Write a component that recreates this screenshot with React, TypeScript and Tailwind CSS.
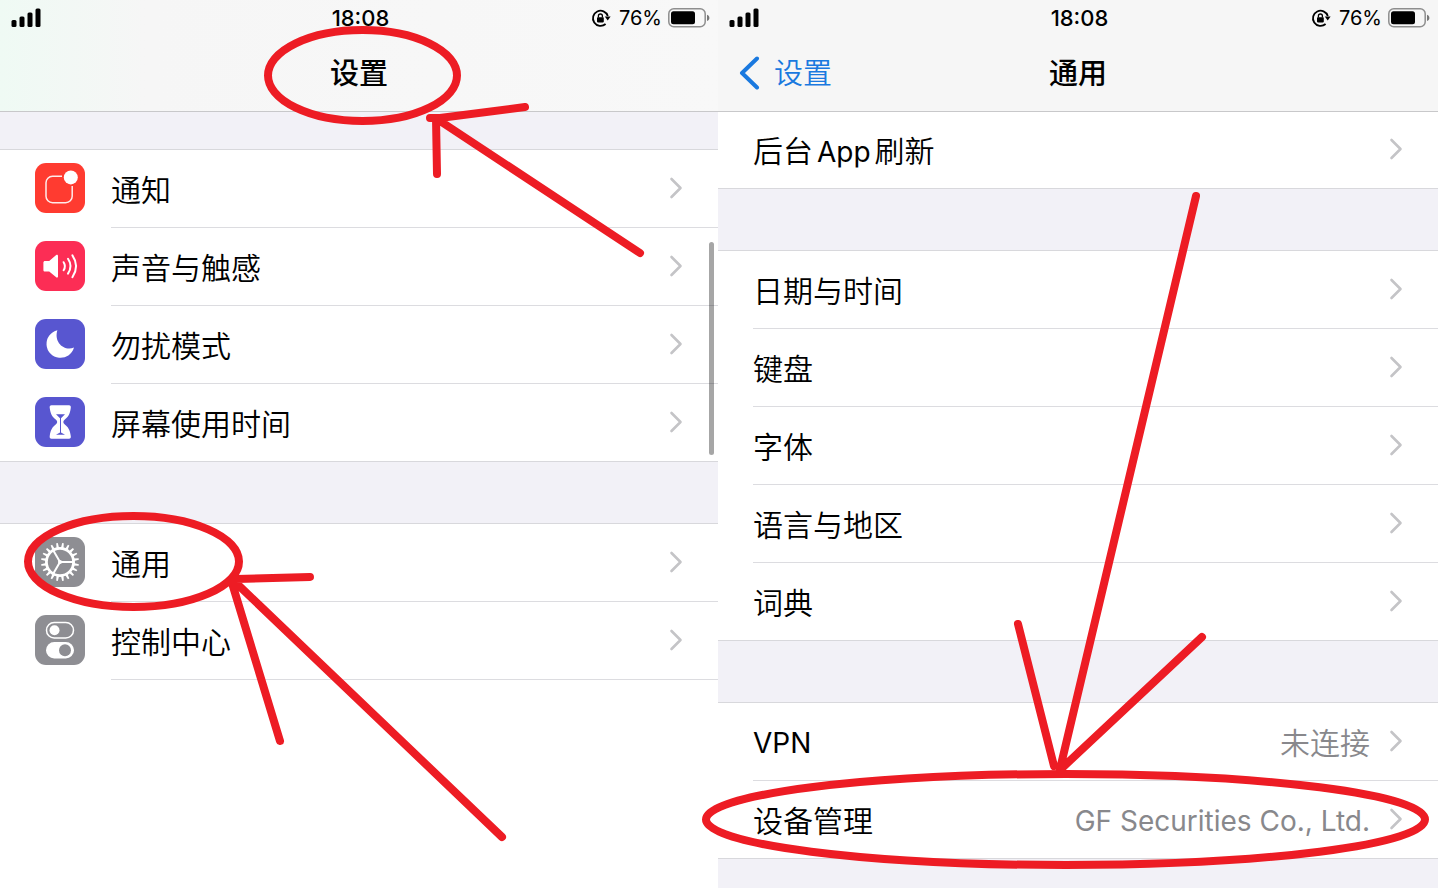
import type { ReactNode } from "react";

type RowProps = {
  label: ReactNode;
  icon?: ReactNode;
  value?: ReactNode;
};

const TEETH = Array.from({ length: 20 }, (_, i) => 9 + i * 18);

function Tile({ color, children }: { color: string; children: ReactNode }) {
  return (
    <svg viewBox="0 0 50 50" className="mb-0.5 mr-[26px] h-[50px] w-[50px] shrink-0" fill="none" aria-hidden="true">
      <rect width="50" height="50" rx="11" fill={color} />
      {children}
    </svg>
  );
}

function NotificationIcon() {
  return (
    <Tile color="#ff3b30">
      <path
        d="M27 13.3H17.5a6.5 6.5 0 0 0-6.5 6.5v13.4a6.5 6.5 0 0 0 6.5 6.5h13.2a6.5 6.5 0 0 0 6.5-6.5V23"
        stroke="#fff"
        strokeOpacity="0.9"
        strokeWidth="1.5"
      />
      <circle cx="35.8" cy="14.4" r="7" fill="#fff" />
    </Tile>
  );
}

function SoundIcon() {
  return (
    <Tile color="#fc2d55">
      <path d="M10 20h4.2l7-6c.8-.6 1.8-.2 1.8.9v20.6c0 1-1 1.5-1.8.8l-7-5.8H10c-1 0-1.6-.7-1.6-1.6v-7.3c0-1 .7-1.6 1.6-1.6z" fill="#fff" />
      <path
        d="M28.6 21.2q2.6 4 0 8M33 17.8q5 7.4 0 14.8M37.4 14.4q7.4 10.8 0 21.8"
        stroke="#fff"
        strokeWidth="2"
        strokeLinecap="round"
      />
    </Tile>
  );
}

function MoonIcon() {
  return (
    <Tile color="#5856d0">
      <path d="M22.4 11.2A14 14 0 1 0 39 28.6c-10 4-20.4-5.6-16.6-17.4z" fill="#fff" />
    </Tile>
  );
}

function HourglassIcon() {
  return (
    <Tile color="#5856d0">
      <path
        d="M16.5 8.3h17.5c1.5 0 2 1 1.8 2.4-.8 6.5-2.8 9.3-6 11.8-2 1.6-2 3.4 0 5 3.2 2.5 5.2 5.3 6 11.8.2 1.4-.3 2.4-1.8 2.4H16.5c-1.5 0-2-1-1.8-2.4.8-6.5 2.8-9.3 6-11.8 2-1.6 2-3.4 0-5-3.2-2.5-5.2-5.3-6-11.8-.2-1.4.3-2.4 1.8-2.4z"
        fill="#fff"
      />
      <path d="M21 17.2h9l-4 4v14.3l4 2.3h-9l4-2.3V21.2z" fill="#5856d0" />
    </Tile>
  );
}

function GearIcon() {
  return (
    <Tile color="#8e8e93">
      {TEETH.map((deg) => (
        <path key={deg} d="M38 23.6l6 .6v1.6l-6 .6z" fill="#fff" transform={`rotate(${deg} 25 25)`} />
      ))}
      <circle cx="25" cy="25" r="13.6" stroke="#fff" strokeWidth="2.8" />
      <path d="M25 25h13M25 25l-6.5-11.3M25 25l-6.5 11.3" stroke="#fff" strokeWidth="2" />
      <circle cx="25" cy="25" r="2" fill="#fff" />
    </Tile>
  );
}

function ControlIcon() {
  return (
    <Tile color="#8e8e93">
      <rect x="11.5" y="7.5" width="27" height="15.5" rx="7.75" stroke="#fff" strokeWidth="1.5" />
      <circle cx="19.5" cy="15.2" r="5" fill="#fff" />
      <rect x="11" y="27" width="28" height="16.5" rx="8.25" fill="#fff" />
      <circle cx="30" cy="35.2" r="6" fill="#8e8e93" />
    </Tile>
  );
}

function Chevron() {
  return (
    <svg viewBox="0 0 14 22" className="mb-0.5 h-[22px] w-[14px] shrink-0" fill="none" aria-hidden="true">
      <path d="M2.5 2l9 9-9 9" stroke="#c4c4c7" strokeWidth="2.6" strokeLinecap="round" strokeLinejoin="round" />
    </svg>
  );
}

function StatusBar() {
  return (
    <div className="grid h-9 grid-cols-3 items-center pl-[11px] pr-2">
      <svg viewBox="0 0 30 20" className="mb-0.5 h-5 w-[30px]" aria-hidden="true">
        <rect x="0.5" y="13" width="5" height="7" rx="1.5" />
        <rect x="8.5" y="9.5" width="5" height="10.5" rx="1.5" />
        <rect x="16.5" y="5.5" width="5" height="14.5" rx="1.5" />
        <rect x="24.5" y="1.5" width="5" height="18.5" rx="1.5" />
      </svg>
      <time className="text-center text-[22px] font-medium leading-6">18:08</time>
      <div className="flex items-center justify-end">
        <svg viewBox="0 0 20 20" className="h-5 w-5" fill="none" aria-hidden="true">
          <path d="M16.8 8A7.6 7.6 0 1 0 14.6 16" stroke="#000" strokeWidth="1.8" />
          <path d="M13.8 8.4h5.8l-2.9 4.2z" fill="#000" />
          <rect x="6" y="9.2" width="6.8" height="5.2" rx="0.8" fill="#000" />
          <path d="M7.4 9.6V8a2 2 0 0 1 4 0v1.6" stroke="#000" strokeWidth="1.3" />
        </svg>
        <span className="ml-2 text-xl leading-6">76%</span>
        <svg viewBox="0 0 42 20" className="ml-1.5 h-5 w-[42px]" fill="none" aria-hidden="true">
          <rect x="0.8" y="0.8" width="36.4" height="18" rx="5" stroke="#8e8e8e" strokeWidth="1.5" />
          <rect x="3" y="3.2" width="24" height="13" rx="2.5" fill="#000" />
          <path d="M39 6.8c3.2 1 3.2 5.2 0 6.2z" fill="#777" />
        </svg>
      </div>
    </div>
  );
}

// Latin runs sit slightly smaller than the Chinese text beside them
function Latin({ children }: { children: ReactNode }) {
  return <span className="text-[28px] font-normal">{children}</span>;
}

function Row({ label, icon, value }: RowProps) {
  return (
    <li>
      <a href="#" className="flex items-center pl-[35px]">
        {icon}
        <span className="flex h-[78px] flex-1 items-center border-b border-[#dcdce0] pr-[35px] text-[30px] font-[350] leading-10">
          <span className="flex-1 pt-0.5">{label}</span>
          {value && <span className="mr-[19px] pt-0.5 text-[#88888c]">{value}</span>}
          <Chevron />
        </span>
      </a>
    </li>
  );
}

// list block whose last divider runs the full width
function Group({ children }: { children: ReactNode }) {
  return (
    <ul className="border-y border-[#d8d8dc] bg-white [&>li:last-child>a>span]:h-[77px] [&>li:last-child>a>span]:border-b-0">
      {children}
    </ul>
  );
}

function Annotations() {
  return (
    <svg
      viewBox="0 0 1444 888"
      className="pointer-events-none absolute left-0 top-0 w-full"
      fill="none"
      stroke="#ed1c24"
      strokeWidth="8"
      strokeLinecap="round"
      aria-hidden="true"
    >
      <ellipse cx="362.5" cy="75.5" rx="94.5" ry="45.5" />
      <path d="M640 253L437 119M430 118h10L525 107M436 118l1 56" />
      <ellipse cx="133.5" cy="561.5" rx="105.5" ry="45.5" />
      <path d="M502 837L234 581M236 579L310 577M232 583L280 741" />
      <ellipse cx="1065.5" cy="819.5" rx="359.5" ry="45.5" />
      <path d="M1196 196L1060 769M1018 624L1054 766M1202 637L1061 769" />
    </svg>
  );
}

export default function App() {
  return (
    <div className="relative min-h-screen overflow-hidden bg-white pr-1.5 font-['Inter','Noto_Sans_CJK_SC',sans-serif] text-black">
      <div className="grid min-h-screen grid-cols-[359fr_360fr]">
        <section className="relative flex flex-col bg-white">
          <header className="h-28 border-b border-[#c8c8ca] bg-linear-to-r from-[#effaf4] via-[#f6f6f6] via-20% to-[#f8f8f8]">
            <StatusBar />
            <h1 className="pt-[18px] text-center text-[29px] font-medium leading-10">设置</h1>
          </header>
          <div className="h-[37px] bg-[#f2f1f7]" />
          <Group>
            <Row icon={<NotificationIcon />} label="通知" />
            <Row icon={<SoundIcon />} label="声音与触感" />
            <Row icon={<MoonIcon />} label="勿扰模式" />
            <Row icon={<HourglassIcon />} label="屏幕使用时间" />
          </Group>
          <div className="h-[61px] bg-[#f2f1f7]" />
          <ul className="border-t border-[#d8d8dc]">
            <Row icon={<GearIcon />} label="通用" />
            <Row icon={<ControlIcon />} label="控制中心" />
          </ul>
          <div className="absolute right-1 top-[242px] h-[213px] w-[5px] rounded-full bg-black/35" />
        </section>

        <section className="flex flex-col bg-[#f2f1f7]">
          <header className="h-28 border-b border-[#c8c8ca] bg-[#f6f6f6]">
            <StatusBar />
            <div className="grid grid-cols-3 items-center pt-[18px] text-[29px] leading-10">
              <button className="flex items-center pl-5 font-[350] text-[#1a79df]">
                <svg viewBox="0 0 22 34" className="mb-0.5 mr-3.5 h-[34px] w-[22px]" fill="none" aria-hidden="true">
                  <path d="M19 2.5L4 17l15 14.5" stroke="currentColor" strokeWidth="4" strokeLinecap="round" strokeLinejoin="round" />
                </svg>
                设置
              </button>
              <h1 className="text-center font-medium">通用</h1>
            </div>
          </header>
          <ul className="border-b border-[#d8d8dc] bg-white [&>li>a>span]:h-[76px] [&>li>a>span]:border-b-0">
            <Row
              label={
                <>
                  后台<span className="mx-1 text-[28px] font-normal">App</span>刷新
                </>
              }
            />
          </ul>
          <div className="h-[61px]" />
          <Group>
            <Row label="日期与时间" />
            <Row label="键盘" />
            <Row label="字体" />
            <Row label="语言与地区" />
            <Row label="词典" />
          </Group>
          <div className="h-[61px]" />
          <Group>
            <Row label={<Latin>VPN</Latin>} value="未连接" />
            <Row label="设备管理" value={<Latin>GF Securities Co., Ltd.</Latin>} />
          </Group>
        </section>
      </div>
      <Annotations />
    </div>
  );
}
